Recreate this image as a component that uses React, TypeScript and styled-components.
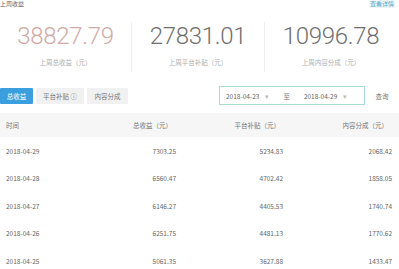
import styled, { createGlobalStyle } from "styled-components"

const Global = createGlobalStyle`
  body {
    margin: 0;
    background: #fff;
    font-family: "Noto Sans CJK SC", "Noto Sans", sans-serif;
    color: #555;
  }
`;

const Page = styled.div`
  width: 399px;
  height: 269px;
  overflow: hidden;
`;

const TopBar = styled.div`
  display: flex;
  justify-content: space-between;
  align-items: flex-start;
  height: 8px;
  padding: 0 4px 0 0;
  font-size: 6px;
  line-height: 8px;
`;

const Title = styled.span`
  color: #666;
`;

const More = styled.span`
  color: #4aa8c8;
  background: #eef6f8;
  padding: 0 1px;
`;

const Stats = styled.div`
  display: grid;
  grid-template-columns: 131px 133px 133px;
  margin-top: 14px;
  height: 50px;
`;

const Stat = styled.div<{ $divider?: boolean }>`
  display: flex;
  flex-direction: column;
  align-items: center;
  border-left: ${p => (p.$divider ? "1px solid #f0f0f0" : "none")};
`;

const Big = styled.div<{ $accent?: boolean }>`
  font-family: Roboto, "Liberation Sans", sans-serif;
  font-weight: 300;
  font-size: 24px;
  line-height: 28px;
  letter-spacing: -0.3px;
  color: ${p => (p.$accent ? "#cfaaa6" : "#707070")};
`;

const Caption = styled.div`
  margin-top: 7px;
  font-size: 6.5px;
  color: #b0b0b0;
`;

const Controls = styled.div`
  display: flex;
  align-items: center;
  margin-top: 14px;
  height: 19px;
`;

const Tabs = styled.div`
  display: flex;
  gap: 3px;
`;

const Tab = styled.div<{ $active?: boolean; $w: number }>`
  width: ${p => p.$w}px;
  height: 16px;
  display: flex;
  align-items: center;
  justify-content: center;
  font-size: 6.5px;
  border-radius: 1px;
  background: ${p => (p.$active ? "#3b9fdf" : "#f1f1f1")};
  color: ${p => (p.$active ? "#fff" : "#777")};
`;

const DateRange = styled.div`
  margin-left: auto;
  width: 146px;
  height: 19px;
  box-sizing: border-box;
  border: 1px solid #a9dcd2;
  display: flex;
  align-items: center;
  padding: 0 6px;
  font-size: 6.5px;
  color: #666;
`;

const DateText = styled.span`
  display: flex;
  align-items: center;
  gap: 6px;
`;

const Caret = styled.span`
  color: #bbb;
`;

const To = styled.span`
  margin: 0 14px;
  color: #777;
`;

const Query = styled.div`
  width: 34px;
  text-align: center;
  font-size: 6.5px;
  color: #777;
`;

const Table = styled.div`
  margin-top: 8px;
`;

const Row = styled.div<{ $head?: boolean }>`
  display: grid;
  grid-template-columns: 94px 76px 107px 109px;
  align-items: center;
  height: ${p => (p.$head ? "24px" : "27.5px")};
  padding: 0 7px 0 6px;
  background: ${p => (p.$head ? "#f6f6f6" : "#fff")};
  font-size: 6.5px;
  color: ${p => (p.$head ? "#777" : "#666")};
`;

const Cell = styled.div<{ $right?: boolean; $pad?: number }>`
  text-align: ${p => (p.$right ? "right" : "left")};
  padding-right: ${p => p.$pad ?? 0}px;
  white-space: nowrap;
`;

const rows = [
  ["2018-04-29", "7303.25", "5234.83", "2068.42"],
  ["2018-04-28", "6560.47", "4702.42", "1858.05"],
  ["2018-04-27", "6146.27", "4405.53", "1740.74"],
  ["2018-04-26", "6251.75", "4481.13", "1770.62"],
  ["2018-04-25", "5061.35", "3627.88", "1433.47"],
];

export default function App() {
  return (
    <Page>
      <Global />
      <TopBar>
        <Title>上周收益</Title>
        <More>查看详情</More>
      </TopBar>
      <Stats>
        <Stat>
          <Big $accent>38827.79</Big>
          <Caption>上周总收益（元）</Caption>
        </Stat>
        <Stat $divider>
          <Big>27831.01</Big>
          <Caption>上周平台补贴（元）</Caption>
        </Stat>
        <Stat $divider>
          <Big>10996.78</Big>
          <Caption>上周内容分成（元）</Caption>
        </Stat>
      </Stats>
      <Controls>
        <Tabs>
          <Tab $active $w={33}>总收益</Tab>
          <Tab $w={48}>平台补贴 ⓘ</Tab>
          <Tab $w={41}>内容分成</Tab>
        </Tabs>
        <DateRange>
          <DateText>2018-04-23 <Caret>▾</Caret></DateText>
          <To>至</To>
          <DateText>2018-04-29 <Caret>▾</Caret></DateText>
        </DateRange>
        <Query>查询</Query>
      </Controls>
      <Table>
        <Row $head>
          <Cell>时间</Cell>
          <Cell $right $pad={4}>总收益（元）</Cell>
          <Cell $right $pad={3}>平台补贴（元）</Cell>
          <Cell $right $pad={4}>内容分成（元）</Cell>
        </Row>
        {rows.map(r => (
          <Row key={r[0]}>
            <Cell>{r[0]}</Cell>
            <Cell $right>{r[1]}</Cell>
            <Cell $right>{r[2]}</Cell>
            <Cell $right>{r[3]}</Cell>
          </Row>
        ))}
      </Table>
    </Page>
  )
}
